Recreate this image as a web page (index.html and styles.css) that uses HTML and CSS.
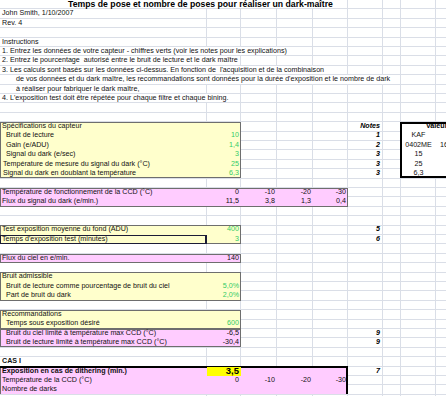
FILE: index.html
```html
<!DOCTYPE html>
<html lang="fr">
<head>
<meta charset="utf-8">
<title>Temps de pose et nombre de poses</title>
<link rel="stylesheet" href="styles.css">
</head>
<body>
<div class="sheet">
  <div class="line title"><span class="t">Temps de pose et nombre de poses pour réaliser un dark-maître</span></div>
  <div class="line"><span class="t">John Smith, 1/10/2007</span></div>
  <div class="line"><span class="t">Rev. 4</span></div>
  <div class="line"></div>
  <div class="line"><span class="t">Instructions</span></div>
  <div class="line"><span class="t">1. Entrez les données de votre capteur - chiffres verts (voir les notes pour les explications)</span></div>
  <div class="line"><span class="t">2. Entrez le pourcentage  autorisé entre le bruit de lecture et le dark maître</span></div>
  <div class="line"><span class="t">3. Les calculs sont basés sur les données ci-dessus. En fonction de  l'acquisition et de la combinaison</span></div>
  <div class="line"><span class="t indent">de vos données et du dark maître, les recommandations sont données pour la durée d'exposition et le nombre de dark</span></div>
  <div class="line"><span class="t indent">à réaliser pour fabriquer le dark maître,</span></div>
  <div class="line"><span class="t">4. L'exposition test doit être répétée pour chaque filtre et chaque bining.</span></div>
  <div class="line"></div>
  <div class="line"></div>

  <section class="band">
    <div class="box yellow ab">
      <div class="row"><span class="lbl">Spécifications du capteur</span><span></span></div>
      <div class="row"><span class="lbl in1">Bruit de lecture</span><span class="num green">10</span></div>
      <div class="row"><span class="lbl in1">Gain (e/ADU)</span><span class="num green">1,4</span></div>
      <div class="row"><span class="lbl in1">Signal du dark (e/sec)</span><span class="num green">3</span></div>
      <div class="row"><span class="lbl in2">Température de mesure du signal du dark (°C)</span><span class="num green">25</span></div>
      <div class="row"><span class="lbl in2">Signal du dark en doublant la température</span><span class="num green">6,3</span></div>
    </div>
    <div class="notes">
      <div class="note">Notes</div>
      <div class="note">1</div>
      <div class="note">2</div>
      <div class="note">3</div>
      <div class="note">3</div>
      <div class="note">3</div>
    </div>
    <div class="values">
      <div class="vrow head">Valeurs</div>
      <div class="vrow"><span class="vc">KAF</span><span></span></div>
      <div class="vrow"><span class="vc">0402ME</span><span class="vx">16803</span></div>
      <div class="vrow"><span class="vc">15</span><span></span></div>
      <div class="vrow"><span class="vc">25</span><span></span></div>
      <div class="vrow"><span class="vc">6,3</span><span></span></div>
    </div>
  </section>

  <div class="line"></div>

  <section class="band">
    <div class="box pink ae">
      <div class="row"><span class="lbl">Température de fonctionnement de la CCD (°C)</span><span class="num">0</span><span class="num">-10</span><span class="num">-20</span><span class="num">-30</span></div>
      <div class="row"><span class="lbl">Flux du signal du dark (e/min.)</span><span class="num">11,5</span><span class="num">3,8</span><span class="num">1,3</span><span class="num">0,4</span></div>
    </div>
  </section>

  <div class="line"></div>
  <div class="line"></div>

  <section class="band">
    <div class="box yellow ab">
      <div class="row"><span class="lbl">Test exposition moyenne du fond (ADU)</span><span class="num green">400</span></div>
      <div class="row"><span class="lbl sel">Temps d'exposition test (minutes)</span><span class="num green">3</span></div>
    </div>
    <div class="notes">
      <div class="note">5</div>
      <div class="note">6</div>
    </div>
  </section>

  <div class="line"></div>

  <section class="band">
    <div class="box pink ab">
      <div class="row"><span class="lbl">Flux du ciel en e/min.</span><span class="num">140</span></div>
    </div>
  </section>

  <div class="line"></div>

  <section class="band">
    <div class="box yellow ab">
      <div class="row"><span class="lbl">Bruit admissible</span><span></span></div>
      <div class="row"><span class="lbl in1">Bruit de lecture comme pourcentage de bruit du ciel</span><span class="num green">5,0%</span></div>
      <div class="row"><span class="lbl in1">Part de bruit du dark</span><span class="num green">2,0%</span></div>
    </div>
  </section>

  <div class="line"></div>

  <section class="band">
    <div class="box yellow ab">
      <div class="row"><span class="lbl">Recommandations</span><span></span></div>
      <div class="row"><span class="lbl in1">Temps sous exposition désiré</span><span class="num green">600</span></div>
    </div>
  </section>

  <section class="band">
    <div class="box pink ab">
      <div class="row"><span class="lbl in1">Bruit du ciel limité à température max CCD (°C)</span><span class="num">-6,5</span></div>
      <div class="row"><span class="lbl in1">Bruit de lecture limité à température max CCD (°C)</span><span class="num">-30,4</span></div>
    </div>
    <div class="notes">
      <div class="note">9</div>
      <div class="note">9</div>
    </div>
  </section>

  <div class="line"></div>
  <div class="line"><span class="t bold">CAS I</span></div>

  <section class="band">
    <div class="box pink ae cas">
      <div class="row first"><span class="lbl bold">Exposition en cas de dithering (min.)</span><span class="num big">3,5</span><span></span><span></span><span></span></div>
      <div class="row"><span class="lbl">Température de la CCD (°C)</span><span class="num">0</span><span class="num">-10</span><span class="num">-20</span><span class="num">-30</span></div>
      <div class="row"><span class="lbl">Nombre de darks</span><span></span><span></span><span></span><span></span></div>
    </div>
    <div class="notes">
      <div class="note low">7</div>
    </div>
  </section>
</div>
</body>
</html>
```

FILE: styles.css
```css
* {
  box-sizing: border-box;
  margin: 0;
  padding: 0;
}

html, body {
  margin: 0;
  background: #ffffff;
}

body {
  font-family: "Liberation Sans", Arial, sans-serif;
  font-size: 7.15px;
  color: #111111;
}

.sheet {
  --row: 9.4px;
  --g: #dadee7;
  width: 446px;
  height: 396px;
  overflow: hidden;
  background:
    linear-gradient(to right,
      transparent 206px, var(--g) 206px 207px,
      transparent 207px 240px, var(--g) 240px 241px,
      transparent 241px 276px, var(--g) 276px 277px,
      transparent 277px 312px, var(--g) 312px 313px,
      transparent 313px 347px, var(--g) 347px 348px,
      transparent 348px 382px, var(--g) 382px 383px,
      transparent 383px 400px, var(--g) 400px 401px,
      transparent 401px 435px, var(--g) 435px 436px,
      transparent 436px),
    repeating-linear-gradient(to bottom, transparent 0 8.4px, var(--g) 8.4px 9.4px);
}

/* plain sheet rows */
.line {
  height: var(--row);
  line-height: var(--row);
  white-space: pre;
}

.line .t {
  display: inline-block;
  height: 8.4px;
  padding: 0 2px;
  background: #ffffff;
  vertical-align: top;
}

.line .t.indent {
  padding-left: 16px;
}

.title {
  padding-left: 66px;
}

.title .t {
  font-size: 8.7px;
  font-weight: bold;
  color: #000;
}

.bold {
  font-weight: bold;
}

/* bands: a group of rows that share the sheet columns */
.band {
  display: grid;
  grid-template-columns: 207px 34px 36px 36px 35px 35px 18px 35px 1fr;
  align-items: start;
}

.band > * {
  grid-row: 1;
}

.ab { grid-column: 1 / 3; }
.ae { grid-column: 1 / 6; }
.notes { grid-column: 6; }
.values { grid-column: 8 / 10; }

.box {
  box-shadow: inset 0 0 0 1px #6e6e6e;
}

.yellow { background: #ffffcc; }
.pink { background: #ffccff; }

.row {
  display: grid;
  height: var(--row);
  line-height: var(--row);
}

.ab .row { grid-template-columns: 207px 34px; }
.ae .row { grid-template-columns: 207px 34px 36px 36px 35px; }

.lbl {
  padding-left: 2px;
  white-space: nowrap;
}

.lbl.in1 { padding-left: 6px; }
.lbl.in2 { padding-left: 3px; }

.lbl.sel {
  box-shadow: inset 0 0 0 1px #1c1c36, inset -1px 0 0 1px #1c1c36;
}

.num {
  text-align: right;
  padding-right: 2px;
  white-space: nowrap;
}

.green { color: #33cc66; }

.cas .row.first {
  line-height: 11px;
}

.num.big {
  background: #ffff00;
  font-size: 9.5px;
  font-weight: bold;
  color: #000;
  margin-top: 1px;
  height: 8.4px;
  line-height: 8.6px;
}

.cas {
  box-shadow: inset 0 2px 0 #000, inset -2px 0 0 #000, inset 1px 0 0 #6e6e6e;
}

.note {
  height: var(--row);
  line-height: var(--row);
  text-align: right;
  padding-right: 3px;
  font-weight: bold;
  font-style: italic;
  color: #000;
}

.note.low {
  line-height: 11px;
}

.values {
  margin-left: -1px;
  background: #ffffff;
  box-shadow: inset 2px 0 0 #000, inset 0 2px 0 #000, inset 0 -2px 0 #000;
}

.vrow {
  display: grid;
  grid-template-columns: 36px 1fr;
  height: var(--row);
  line-height: var(--row);
  white-space: nowrap;
}

.vrow.head {
  display: block;
  padding-left: 26px;
  font-weight: bold;
  color: #000;
}

.vc {
  text-align: center;
  padding-left: 1px;
}

.vx {
  padding-left: 4px;
}
```
